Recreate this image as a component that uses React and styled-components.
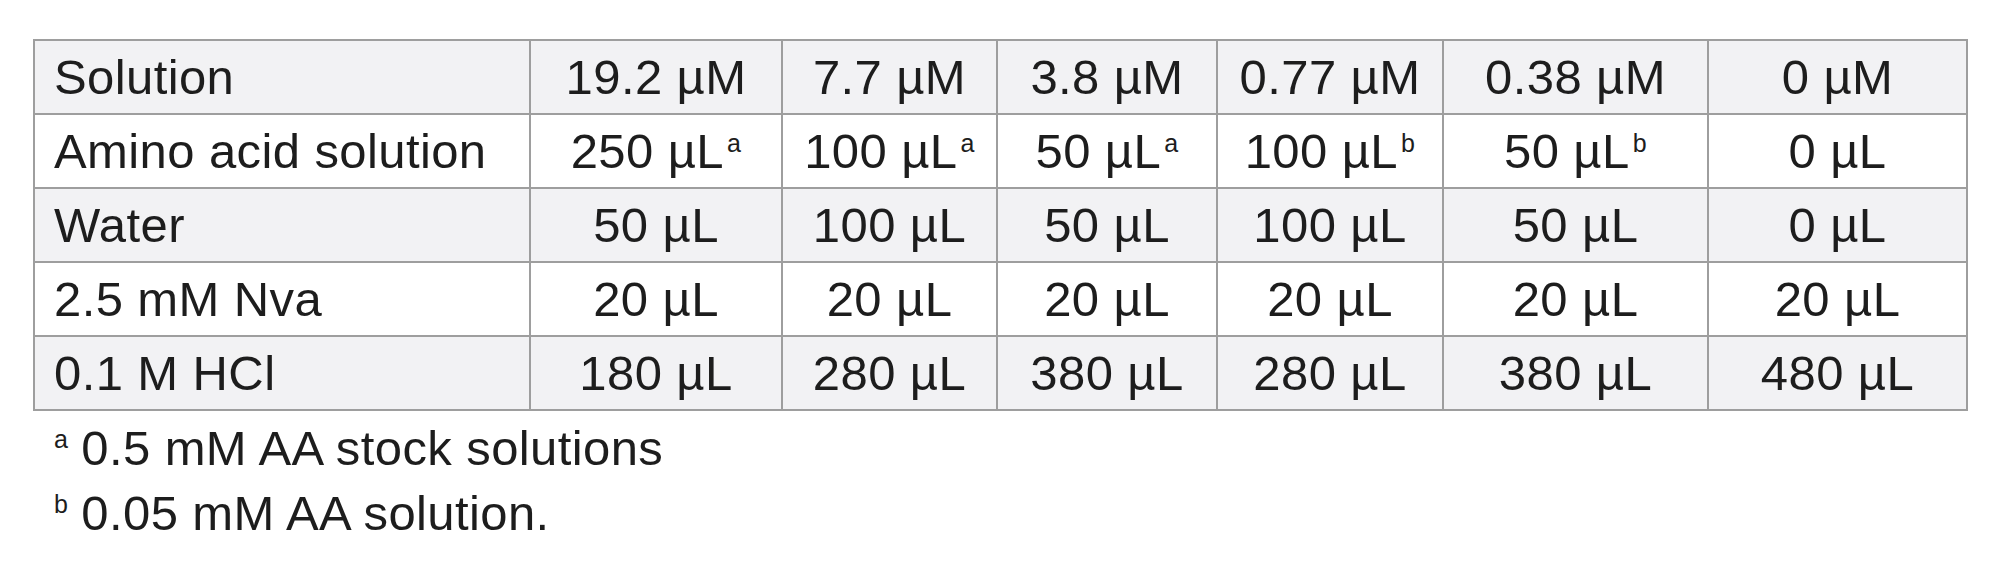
import React from "react";
import styled, { createGlobalStyle } from "styled-components";

// 페이지 기본값
const GlobalStyle = createGlobalStyle`
  body {
    margin: 0;
    background: #ffffff;
    font-family: "Liberation Sans", Arial, sans-serif;
    color: #1d1d1d;
  }
`;

const Page = styled.div`
  padding: 39px 32px 0 33px;
`;

// 표
const Table = styled.table`
  box-sizing: border-box;
  width: 1935px;
  table-layout: fixed;
  border-collapse: separate;
  border-spacing: 0;
  border-top: 2px solid #9e9e9e;
  border-left: 2px solid #9e9e9e;
`;

const Col = styled.col`
  width: ${(props) => props.$w}px;
`;

const Row = styled.tr`
  background: ${(props) => (props.$shaded ? "#f2f2f4" : "#ffffff")};
`;

const Cell = styled.td`
  box-sizing: border-box;
  padding: 0 19px;
  border-right: 2px solid #9e9e9e;
  border-bottom: 2px solid #9e9e9e;
  font-size: 49px;
  letter-spacing: 0.4px;
  line-height: 72px;
  white-space: nowrap;
  text-align: ${(props) => (props.$first ? "left" : "center")};
`;

const Sup = styled.sup`
  font-size: 25px;
  line-height: 0;
  vertical-align: baseline;
  position: relative;
  top: -16px;
  margin-left: 3px;
`;

// 각주
const Notes = styled.div`
  margin-top: 5px;
  padding-left: 21px;
`;

const Note = styled.div`
  font-size: 49px;
  letter-spacing: 0.4px;
  line-height: 65px;
  white-space: nowrap;
`;

const NoteMark = styled.sup`
  font-size: 25px;
  line-height: 0;
  vertical-align: baseline;
  position: relative;
  top: -17px;
  margin-right: 13px;
`;

const widths = [496, 252, 215, 220, 226, 265, 259];

const rows = [
  ["Solution", "19.2 µM", "7.7 µM", "3.8 µM", "0.77 µM", "0.38 µM", "0 µM"],
  [
    "Amino acid solution",
    ["250 µL", "a"],
    ["100 µL", "a"],
    ["50 µL", "a"],
    ["100 µL", "b"],
    ["50 µL", "b"],
    "0 µL",
  ],
  ["Water", "50 µL", "100 µL", "50 µL", "100 µL", "50 µL", "0 µL"],
  ["2.5 mM Nva", "20 µL", "20 µL", "20 µL", "20 µL", "20 µL", "20 µL"],
  ["0.1 M HCl", "180 µL", "280 µL", "380 µL", "280 µL", "380 µL", "480 µL"],
];

const notes = [
  ["a", "0.5 mM AA stock solutions"],
  ["b", "0.05 mM AA solution."],
];

const App = () => {
  return (
    <Page>
      <GlobalStyle />
      <Table>
        <colgroup>
          {widths.map((w, i) => (
            <Col key={i} $w={w} />
          ))}
        </colgroup>
        <tbody>
          {rows.map((row, r) => (
            <Row key={r} $shaded={r % 2 === 0}>
              {row.map((cell, c) => (
                <Cell key={c} $first={c === 0}>
                  {Array.isArray(cell) ? (
                    <>
                      {cell[0]}
                      <Sup>{cell[1]}</Sup>
                    </>
                  ) : (
                    cell
                  )}
                </Cell>
              ))}
            </Row>
          ))}
        </tbody>
      </Table>
      <Notes>
        {notes.map(([mark, text]) => (
          <Note key={mark}>
            <NoteMark>{mark}</NoteMark>
            {text}
          </Note>
        ))}
      </Notes>
    </Page>
  );
};

export default App;
